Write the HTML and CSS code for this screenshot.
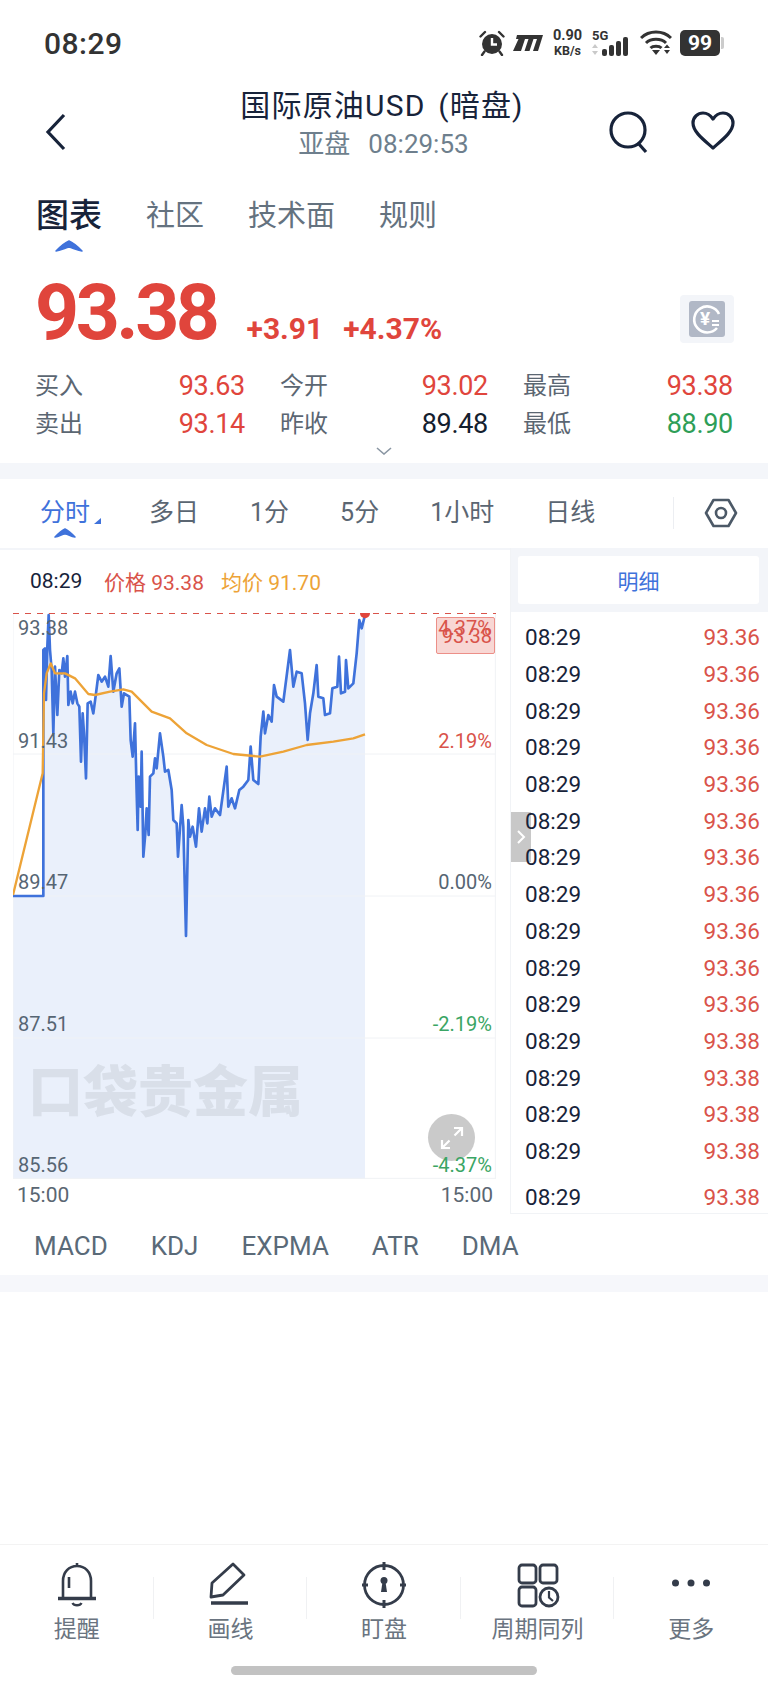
FILE: index.html
```html
<!DOCTYPE html>
<html lang="zh-CN">
<head>
  <meta charset="UTF-8" />
  <meta name="viewport" content="width=device-width, initial-scale=1.0" />
  <title>国际原油USD (暗盘)</title>
  <link rel="stylesheet" href="styles.css">
</head>
<body>
<div class="page">
  <div class="status-bar">
    <div class="status-time">08:29</div>
    <div class="status-icons">
      <svg width="26" height="26" viewBox="0 0 26 26">
        <circle cx="13" cy="14" r="10" fill="#333"/>
        <path d="M13 8v6.5h5" fill="none" stroke="#fff" stroke-width="2.4"/>
        <path d="M1.5 6.5L6 2M24.5 6.5L20 2M5.5 21.500L3 25M20.500 21.500L23 25" fill="none" stroke="#333" stroke-width="2.400" stroke-linecap="round"/>
      </svg>
      <svg width="30" height="18" viewBox="0 0 30 18">
        <path d="M4 1H30L25 17H20L24 5H20.500L16.500 17H11.500L15.500 5H12L8 17H0L5.500 5H3Z" fill="#333"/>
      </svg>
      <div class="status-speed"><b>0.90</b><span>KB/s</span></div>
      <svg width="40" height="28" viewBox="0 0 40 28">
        <text x="0" y="11" class="net-label">5G</text>
        <path d="M3 15l3 4H0ZM3 26l3-4H0Z" fill="#c9c9c9"/>
        <rect x="10" y="20" width="5" height="7" rx="2" fill="#333"/>
        <rect x="17" y="16" width="5" height="11" rx="2" fill="#333"/>
        <rect x="24" y="12" width="5" height="15" rx="2" fill="#333"/>
        <rect x="31" y="8" width="5" height="19" rx="2" fill="#333"/>
      </svg>
      <svg width="32" height="26" viewBox="0 0 32 26">
        <path d="M1 8C9 0 23 0 31 8M6 13C11 8 21 8 26 13M10.500 18C13 15.500 19 15.500 21.500 18" fill="none" stroke="#333" stroke-width="3"/>
        <path d="M12 20h8l-4 5ZM24 18l3-3.500 3 3.500ZM24 20h6l-3 4Z" fill="#333"/>
      </svg>
      <div class="battery">99</div>
    </div>
  </div>

  <header class="top-bar">
    <div class="top-left">
      <svg width="24" height="40" viewBox="0 0 24 40"><path d="M20 3L4 20L20 37" fill="none" stroke="#17233a" stroke-width="3.200"/></svg>
    </div>
    <div class="top-title">
      <div class="title">国际原油USD (暗盘)</div>
      <div class="subtitle"><span>亚盘</span><span>08:29:53</span></div>
    </div>
    <div class="top-right">
      <svg width="46" height="46" viewBox="0 0 46 46">
        <circle cx="21" cy="20" r="17" fill="none" stroke="#17233a" stroke-width="3.200"/>
        <path d="M31 33L39 42" stroke="#17233a" stroke-width="3.200"/>
      </svg>
      <svg width="46" height="42" viewBox="0 0 46 42">
        <path d="M23 38C14 30 3 22 3 13C3 7 8 3 13 3C18 3 21 6 23 9C25 6 28 3 33 3C38 3 43 7 43 13C43 22 32 30 23 38Z" fill="none" stroke="#17233a" stroke-width="3.200" stroke-linejoin="round"/>
      </svg>
    </div>
  </header>

  <nav class="main-tabs">
    <div class="main-tab active">图表
      <svg class="tab-mark" width="28" height="12" viewBox="0 0 28 12"><path d="M1 11C5 7 9 3 14 1C19 3 23 7 27 11C21 10 18 8 14 7C10 8 7 10 1 11Z" fill="#3f72db" stroke="#3f72db" stroke-width="1.500" stroke-linejoin="round"/></svg>
    </div>
    <div class="main-tab">社区</div>
    <div class="main-tab">技术面</div>
    <div class="main-tab">规则</div>
  </nav>

  <section class="price-row">
    <div class="price">93.38</div>
    <div class="change">+3.91</div>
    <div class="change">+4.37%</div>
    <div class="coin">
      <svg width="36" height="36" viewBox="0 0 36 36">
        <rect width="36" height="36" rx="3" fill="#b1b8c6"/>
        <path d="M28 27A13 13 0 1 1 30 13" fill="none" stroke="#fff" stroke-width="2.600"/>
        <text x="16" y="24" class="coin-sign">¥</text>
        <path d="M23 20h7M23 24h7" stroke="#fff" stroke-width="1.800"/>
      </svg>
    </div>
  </section>

  <section class="stats">
    <div class="stat"><span class="stat-name">买入</span><span class="up">93.63</span></div>
    <div class="stat"><span class="stat-name">今开</span><span class="up">93.02</span></div>
    <div class="stat"><span class="stat-name">最高</span><span class="up">93.38</span></div>
    <div class="stat"><span class="stat-name">卖出</span><span class="up">93.14</span></div>
    <div class="stat"><span class="stat-name">昨收</span><span class="flat">89.48</span></div>
    <div class="stat"><span class="stat-name">最低</span><span class="down">88.90</span></div>
  </section>
  <div class="more">
    <svg width="16" height="8" viewBox="0 0 16 8"><path d="M1 1L8 7L15 1" fill="none" stroke="#8a96a3" stroke-width="1.600"/></svg>
  </div>
  <div class="band"></div>

  <nav class="period-tabs">
    <div class="period active">分时
      <i class="period-corner"></i>
      <svg class="period-mark" width="22" height="10" viewBox="0 0 22 10"><path d="M1 9C4 6 7 3 11 1C15 3 18 6 21 9C16 8 14 6 11 6C8 6 6 8 1 9Z" fill="#3f72db" stroke="#3f72db" stroke-width="1.500" stroke-linejoin="round"/></svg>
    </div>
    <div class="period">多日</div>
    <div class="period">1分</div>
    <div class="period">5分</div>
    <div class="period">1小时</div>
    <div class="period">日线</div>
    <div class="period-tools">
      <svg width="34" height="32" viewBox="0 0 34 32">
        <path d="M9.500 3H24.500L32 16L24.500 29H9.500L2 16Z" fill="none" stroke="#4c5967" stroke-width="2.600" stroke-linejoin="round"/>
        <circle cx="17" cy="16" r="5" fill="none" stroke="#4c5967" stroke-width="2.600"/>
      </svg>
    </div>
  </nav>

  <section class="market">
    <div class="chart-col">
      <div class="chart-head">
        <span class="head-time">08:29</span>
        <span class="head-price">价格 93.38</span>
        <span class="head-avg">均价 91.70</span>
      </div>
      <div class="chart">
        <svg class="chart-svg" width="483" height="566" viewBox="39 159 1449 1698">
          <path class="area" d="M39 1008H130V270L135 265L138 420L142 260L146 165L150 270L155 330L160 520L165 320L172 465L178 330L185 340L190 295L195 350L202 288L205 435L212 395L218 430L225 395L232 430L238 440L243 605L248 460L252 520L258 655L263 430L272 425L280 460L288 400L295 345L305 365L315 350L325 380L332 288L340 395L350 340L358 325L365 440L372 400L388 410L392 540L398 590L405 490L410 700L413 810L416 650L422 740L425 575L430 890L436 820L440 745L446 825L450 650L460 640L465 595L470 625L480 520L490 590L495 635L505 630L515 690L520 780L530 790L534 890L545 735L550 800L558 1128L565 780L570 830L578 800L588 860L597 745L605 815L615 745L622 790L628 710L635 770L645 745L660 765L680 620L685 740L695 715L705 745L718 690L730 680L745 660L752 560L760 660L775 672L782 530L790 455L795 520L805 465L815 485L822 375L830 410L850 425L870 270L880 380L890 335L905 340L915 430L923 540L930 460L940 400L950 315L955 410L970 415L975 465L990 460L997 385L1012 380L1017 290L1023 400L1035 395L1038 300L1045 385L1060 370L1070 280L1078 180L1085 205L1095 165V1857H39Z"/>
          <path class="grid" d="M39 159V1857M1486 159V1857M39 582H1486M39 1008H1486M39 1434H1486M39 1855H1486"/>
          <path class="line-price" d="M39 1008H130V270L135 265L138 420L142 260L146 165L150 270L155 330L160 520L165 320L172 465L178 330L185 340L190 295L195 350L202 288L205 435L212 395L218 430L225 395L232 430L238 440L243 605L248 460L252 520L258 655L263 430L272 425L280 460L288 400L295 345L305 365L315 350L325 380L332 288L340 395L350 340L358 325L365 440L372 400L388 410L392 540L398 590L405 490L410 700L413 810L416 650L422 740L425 575L430 890L436 820L440 745L446 825L450 650L460 640L465 595L470 625L480 520L490 590L495 635L505 630L515 690L520 780L530 790L534 890L545 735L550 800L558 1128L565 780L570 830L578 800L588 860L597 745L605 815L615 745L622 790L628 710L635 770L645 745L660 765L680 620L685 740L695 715L705 745L718 690L730 680L745 660L752 560L760 660L775 672L782 530L790 455L795 520L805 465L815 485L822 375L830 410L850 425L870 270L880 380L890 335L905 340L915 430L923 540L930 460L940 400L950 315L955 410L970 415L975 465L990 460L997 385L1012 380L1017 290L1023 400L1035 395L1038 300L1045 385L1060 370L1070 280L1078 180L1085 205L1095 165"/>
          <path class="line-avg" d="M39 1005L128 640L132 400L140 340L152 310L165 340L195 340L225 355L265 402L285 405L330 395L370 388L395 395L455 455L510 475L560 520L620 555L700 582L780 590L850 575L920 555L1000 545L1060 535L1095 523"/>
          <path class="line-last" d="M39 160H1488"/>
          <circle cx="1095" cy="160" r="15" fill="#e0453c"/>
        </svg>
        <div class="watermark">口袋贵金属</div>
        <span class="axis-left row-1">93.38</span>
        <span class="axis-left row-2">91.43</span>
        <span class="axis-left row-3">89.47</span>
        <span class="axis-left row-4">87.51</span>
        <span class="axis-left row-5">85.56</span>
        <div class="last-badge"></div>
        <span class="axis-right row-1b up-soft">4.37%</span>
        <span class="axis-right row-badge up-soft">93.38</span>
        <span class="axis-right row-2 up-soft">2.19%</span>
        <span class="axis-right row-3 flat-soft">0.00%</span>
        <span class="axis-right row-4 down-soft">-2.19%</span>
        <div class="zoom-btn">
          <svg width="26" height="26" viewBox="0 0 26 26"><path d="M15 3H23V11M23 3L15.500 10.500M11 23H3V15M3 23L10.500 15.500" fill="none" stroke="#fff" stroke-width="2.200"/></svg>
        </div>
        <span class="axis-right row-5 down-soft">-4.37%</span>
      </div>
      <div class="time-axis"><span>15:00</span><span>15:00</span></div>
    </div>

    <aside class="detail-col">
      <div class="detail-head"><div class="detail-btn">明细</div></div>
      <div class="collapse">
        <svg width="10" height="16" viewBox="0 0 10 16"><path d="M2 2L8 8L2 14" fill="none" stroke="#fff" stroke-width="2"/></svg>
      </div>
      <div class="detail-list">
        <div class="tick"><span>08:29</span><span class="up-soft">93.36</span></div>
        <div class="tick"><span>08:29</span><span class="up-soft">93.36</span></div>
        <div class="tick"><span>08:29</span><span class="up-soft">93.36</span></div>
        <div class="tick"><span>08:29</span><span class="up-soft">93.36</span></div>
        <div class="tick"><span>08:29</span><span class="up-soft">93.36</span></div>
        <div class="tick"><span>08:29</span><span class="up-soft">93.36</span></div>
        <div class="tick"><span>08:29</span><span class="up-soft">93.36</span></div>
        <div class="tick"><span>08:29</span><span class="up-soft">93.36</span></div>
        <div class="tick"><span>08:29</span><span class="up-soft">93.36</span></div>
        <div class="tick"><span>08:29</span><span class="up-soft">93.36</span></div>
        <div class="tick"><span>08:29</span><span class="up-soft">93.36</span></div>
        <div class="tick"><span>08:29</span><span class="up-soft">93.38</span></div>
        <div class="tick"><span>08:29</span><span class="up-soft">93.38</span></div>
        <div class="tick"><span>08:29</span><span class="up-soft">93.38</span></div>
        <div class="tick"><span>08:29</span><span class="up-soft">93.38</span></div>
        <div class="tick tick-last"><span>08:29</span><span class="up-soft">93.38</span></div>
      </div>
    </aside>
  </section>

  <nav class="indicators">
    <span>MACD</span>
    <span>KDJ</span>
    <span>EXPMA</span>
    <span>ATR</span>
    <span>DMA</span>
  </nav>
  <div class="band band-low"></div>

  <footer class="toolbar">
    <div class="tool">
      <svg width="48" height="48" viewBox="0 0 48 48">
        <path d="M10 37V20C10 11 16 5 24 5S38 11 38 20V37M24 2V5M16 16V27" fill="none" stroke="#343c4a" stroke-width="2.600"/>
        <path d="M5 37.500H43" stroke="#343c4a" stroke-width="3.400"/>
        <path d="M19.500 42C21 45 27 45 28.500 42" fill="none" stroke="#343c4a" stroke-width="2.400"/>
      </svg>
      <span>提醒</span>
    </div>
    <div class="tool">
      <svg width="48" height="48" viewBox="0 0 48 48">
        <path d="M6 22L27 3L38 14L17 34L5 36Z" fill="none" stroke="#343c4a" stroke-width="2.800" stroke-linejoin="round"/>
        <path d="M5 42H42" stroke="#343c4a" stroke-width="3.400"/>
      </svg>
      <span>画线</span>
    </div>
    <div class="tool">
      <svg width="48" height="48" viewBox="0 0 48 48">
        <circle cx="24" cy="24" r="19.500" fill="none" stroke="#343c4a" stroke-width="2.800"/>
        <path d="M24 1V9M24 39V47M2 24H8M40 24H46" stroke="#343c4a" stroke-width="3"/>
        <circle cx="24" cy="19.500" r="3.500" fill="#343c4a"/>
        <path d="M22.500 21H25.500L27 31H21Z" fill="#343c4a"/>
      </svg>
      <span>盯盘</span>
    </div>
    <div class="tool">
      <svg width="48" height="48" viewBox="0 0 48 48">
        <rect x="5" y="4" width="17" height="18" rx="3" fill="none" stroke="#343c4a" stroke-width="2.800"/>
        <rect x="26" y="4" width="17" height="18" rx="3" fill="none" stroke="#343c4a" stroke-width="2.800"/>
        <rect x="5" y="26" width="17" height="19" rx="3" fill="none" stroke="#343c4a" stroke-width="2.800"/>
        <circle cx="35" cy="36" r="9" fill="none" stroke="#343c4a" stroke-width="2.800"/>
        <path d="M35 30V36.500L39 40" fill="none" stroke="#343c4a" stroke-width="2.200"/>
      </svg>
      <span>周期同列</span>
    </div>
    <div class="tool">
      <svg width="48" height="48" viewBox="0 0 48 48">
        <circle cx="8.500" cy="22" r="3.500" fill="#343c4a"/>
        <circle cx="24" cy="22" r="3.500" fill="#343c4a"/>
        <circle cx="39.500" cy="22" r="3.500" fill="#343c4a"/>
      </svg>
      <span>更多</span>
    </div>
  </footer>
  <div class="home-row"><div class="home-bar"></div></div>
</div>
</body>
</html>
```

FILE: styles.css
```css
* {
  margin: 0;
  padding: 0;
  box-sizing: border-box;
  font-family: Roboto, 'Noto Sans CJK SC', sans-serif;
}

body {
  background: #fff;
}

.page {
  width: 768px;
  height: 1690px;
  display: flex;
  flex-direction: column;
  background: #fff;
  overflow: hidden;
}

svg {
  display: block;
  flex: none;
}

/* status bar */
.status-bar {
  height: 86px;
  display: flex;
  align-items: center;
  justify-content: space-between;
  padding: 0 42px 0 44px;
}

.status-time {
  font-size: 30px;
  font-weight: 500;
  letter-spacing: 0.5px;
  color: #333;
}

.status-icons {
  display: flex;
  align-items: center;
  gap: 8px;
}

.status-speed {
  width: 33px;
  display: flex;
  flex-direction: column;
  align-items: center;
  color: #333;
  line-height: 15px;
}

.status-speed b {
  font-size: 14.5px;
  font-weight: 700;
}

.status-speed span {
  font-size: 12.5px;
  font-weight: 700;
}

.net-label {
  font-size: 13px;
  font-weight: 700;
  fill: #333;
}

.battery {
  position: relative;
  width: 40px;
  height: 26px;
  margin-right: 6px;
  border-radius: 5px;
  background: #333;
  color: #fff;
  font-size: 21px;
  font-weight: 700;
  line-height: 26px;
  text-align: center;
}

.battery::after {
  content: '';
  position: absolute;
  right: -4px;
  top: 7px;
  width: 3px;
  height: 12px;
  border-radius: 0 2px 2px 0;
  background: #ccc;
}

/* header */
.top-bar {
  height: 86px;
  display: grid;
  grid-template-columns: 1fr auto 1fr;
  align-items: center;
  padding: 0 32px 0 44px;
}

.top-title {
  padding: 0 0 15px 0;
  margin-right: 16px;
  text-align: center;
}

.title {
  font-size: 30px;
  line-height: 40px;
  letter-spacing: 1.2px;
  word-spacing: 4px;
  color: #17233a;
}

.subtitle {
  display: flex;
  justify-content: center;
  gap: 18px;
  padding-left: 3px;
  font-size: 26px;
  line-height: 36px;
  color: #6e7f8d;
}

.top-right {
  display: flex;
  justify-content: flex-end;
  gap: 37px;
  padding-top: 2px;
}

/* main tabs */
.main-tabs {
  height: 80px;
  display: flex;
  gap: 44px;
  padding: 24px 0 0 36px;
}

.main-tab {
  position: relative;
  height: 40px;
  font-size: 29px;
  line-height: 40px;
  color: #64727f;
}

.main-tab.active {
  font-size: 33px;
  font-weight: 500;
  color: #17233a;
}

.tab-mark {
  position: absolute;
  left: 19px;
  top: 44px;
}

/* price */
.price-row {
  height: 115px;
  display: flex;
  align-items: baseline;
  padding: 23px 34px 0 35px;
  color: #e0453c;
}

.price {
  font-size: 77px;
  font-weight: 700;
  line-height: 77px;
  letter-spacing: -3.500px;
  margin-right: 30px;
}

.change {
  font-size: 30px;
  font-weight: 700;
  margin-right: 20px;
}

.coin {
  align-self: flex-start;
  width: 54px;
  height: 48px;
  margin: 20px 0 0 auto;
  display: flex;
  align-items: center;
  justify-content: center;
  border-radius: 4px;
  background: #f3f5f9;
}

.coin-sign {
  font-size: 19px;
  font-weight: 700;
  fill: #fff;
  text-anchor: middle;
}

/* stats */
.stats {
  display: grid;
  grid-template-columns: 210px 208px 210px;
  grid-auto-rows: 38px;
  column-gap: 35px;
  padding: 0 35px;
}

.stat {
  display: flex;
  align-items: center;
  justify-content: space-between;
  font-size: 27px;
  letter-spacing: -0.3px;
}

.stat-name {
  padding-bottom: 5px;
  font-size: 24px;
  letter-spacing: 0;
  color: #5b6672;
}

.up {
  color: #e0453c;
}

.flat {
  color: #14202e;
}

.down {
  color: #2e9e57;
}

.up-soft {
  color: #d9534a;
}

.flat-soft {
  color: #566573;
}

.down-soft {
  color: #3aa564;
}

.more {
  height: 20px;
  display: flex;
  justify-content: center;
  padding-top: 4px;
}

.band {
  height: 16px;
  background: #f4f6fa;
}

.band-low {
  height: 17px;
  background: #f6f7fb;
}

/* period tabs */
.period-tabs {
  height: 69px;
  display: flex;
  align-items: center;
  gap: 51px;
  padding: 0 30px 2px 40px;
}

.period {
  position: relative;
  font-size: 25px;
  line-height: 34px;
  color: #5b6672;
}

.period.active {
  margin-right: 8px;
  color: #3f72db;
}

.period-corner {
  position: absolute;
  right: -11px;
  bottom: 6px;
  border-left: 7px solid transparent;
  border-bottom: 6px solid #3f72db;
}

.period-mark {
  position: absolute;
  left: 14px;
  top: 32px;
}

.period-tools {
  margin-left: auto;
  padding-left: 30px;
  border-left: 1px solid #eceef2;
}

/* chart */
.market {
  height: 666px;
  display: flex;
}

.chart-col {
  width: 510px;
  border-top: 2px solid #f3f5f9;
}

.chart-head {
  height: 63px;
  display: flex;
  align-items: center;
  padding: 0 0 1px 30px;
  font-size: 21px;
}

.head-time {
  width: 74px;
  color: #17233a;
}

.head-price {
  width: 117px;
  color: #d9534a;
}

.head-avg {
  color: #eda337;
}

.chart {
  position: relative;
  width: 483px;
  height: 566px;
  margin-left: 13px;
}

.chart-svg {
  position: absolute;
  left: 0;
  top: 0;
}

.area {
  fill: #eaf0fb;
}

.grid {
  fill: none;
  stroke: #f0f2f5;
  stroke-width: 3;
}

.line-price {
  fill: none;
  stroke: #3f72db;
  stroke-width: 8;
  stroke-linejoin: round;
}

.line-avg {
  fill: none;
  stroke: #eda337;
  stroke-width: 7;
  stroke-linejoin: round;
}

.line-last {
  fill: none;
  stroke: #d9534a;
  stroke-width: 4.5;
  stroke-dasharray: 18 18;
}

.watermark {
  position: absolute;
  left: 15px;
  top: 449px;
  font-size: 55px;
  font-weight: 900;
  line-height: 60px;
  white-space: nowrap;
  color: #d9dfe9;
}

.axis-left,
.axis-right {
  position: absolute;
  font-size: 20px;
  line-height: 24px;
}

.axis-left {
  left: 5px;
  color: #566573;
}

.axis-right {
  right: 4px;
}

.row-1 { top: 3px; }
.row-1b { top: 3px; }
.row-badge { top: 11px; }
.row-2 { top: 116px; }
.row-3 { top: 257px; }
.row-4 { top: 399px; }
.row-5 { top: 540px; }

.last-badge {
  position: absolute;
  left: 423px;
  top: 4px;
  width: 59px;
  height: 37px;
  border: 1px solid #ec8f88;
  border-radius: 2px;
  background: #f8d7d4;
}

.zoom-btn {
  position: absolute;
  left: 415px;
  top: 501px;
  width: 47px;
  height: 47px;
  display: flex;
  align-items: center;
  justify-content: center;
  border-radius: 50%;
  background: #cacaca;
}

.time-axis {
  display: flex;
  justify-content: space-between;
  padding: 0 17px 0 17px;
  font-size: 21px;
  line-height: 33px;
  color: #5a6672;
}

/* tick list */
.detail-col {
  position: relative;
  width: 258px;
  border-left: 1px solid #f1f3f6;
  border-bottom: 1px solid #f1f3f6;
}

.detail-head {
  height: 64px;
  padding: 8px 9px 8px 7px;
  background: #f3f5f9;
}

.detail-btn {
  height: 48px;
  border-radius: 3px;
  background: #fff;
  font-size: 21px;
  line-height: 52px;
  text-align: center;
  color: #3f72db;
}

.collapse {
  position: absolute;
  left: 0;
  top: 264px;
  width: 20px;
  height: 50px;
  display: flex;
  align-items: center;
  justify-content: center;
  background: #c8c8c8;
}

.detail-list {
  position: relative;
  padding: 7px 8px 0 14px;
}

.tick {
  height: 36.7px;
  display: flex;
  align-items: center;
  justify-content: space-between;
  font-size: 22.5px;
  color: #17233a;
}

.tick-last {
  margin-top: 9.5px;
}

/* indicators */
.indicators {
  height: 61px;
  display: flex;
  align-items: center;
  gap: 43px;
  padding: 2px 0 0 34px;
  font-size: 26px;
  color: #5a6a78;
}

/* toolbar */
.toolbar {
  margin-top: auto;
  height: 101px;
  display: grid;
  grid-template-columns: repeat(5, 1fr);
  padding-top: 16px;
  border-top: 1px solid #f3f3f3;
}

.tool {
  position: relative;
  display: flex;
  flex-direction: column;
  align-items: center;
  font-size: 23px;
  line-height: 30px;
  color: #6a7480;
}

.tool span {
  margin-top: 6px;
}

.tool:not(:last-child)::after {
  content: '';
  position: absolute;
  right: 0;
  top: 16px;
  width: 1px;
  height: 42px;
  background: #f0f1f3;
}

.home-row {
  height: 45px;
  display: flex;
  justify-content: center;
  padding-top: 21px;
}

.home-bar {
  width: 306px;
  height: 9px;
  border-radius: 5px;
  background: #c2c2c2;
}
```
